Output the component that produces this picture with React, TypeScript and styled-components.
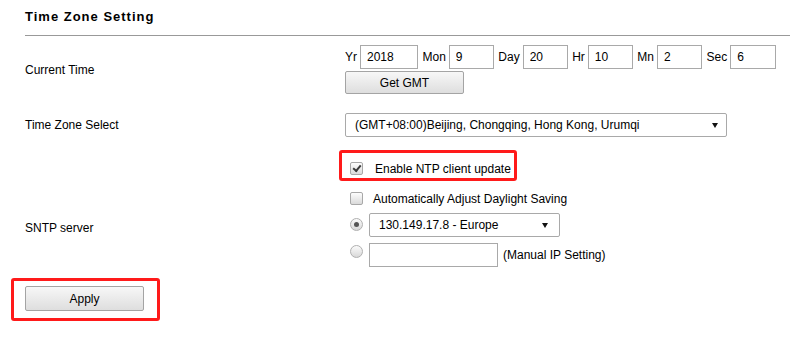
import styled, { createGlobalStyle } from 'styled-components'

const Global = createGlobalStyle`
    body {
        margin: 0;
        background: #fff;
        font-family: "Liberation Sans", Arial, sans-serif;
        font-size: 12px;
        color: #000;
    }
`

const Page = styled.div`
    padding: 9px 0 0 25px;
`

const Title = styled.h2`
    margin: 0;
    font-size: 13px;
    line-height: 15px;
    font-weight: bold;
    letter-spacing: 1px;
`

const Divider = styled.div`
    margin-top: 11px;
    border-top: 1px solid #999;
`

const Row = styled.div<{ $top: number }>`
    display: flex;
    margin-top: ${({ $top }) => $top}px;
`

const Label = styled.div`
    width: 320px;
    flex-shrink: 0;
    align-self: center;
`

const Value = styled.div`
    display: flex;
    flex-direction: column;
    align-items: flex-start;
`

const TimeLine = styled.div`
    display: flex;
    align-items: center;
    gap: 4.5px;
`

const TimeField = styled.label`
    display: flex;
    align-items: center;
    gap: 3px;
`

const TextBox = styled.input<{ $w: number }>`
    box-sizing: border-box;
    width: ${({ $w }) => $w}px;
    height: 24px;
    margin: 0;
    padding: 0 6px;
    border: 1px solid #a9a9a9;
    font-family: inherit;
    font-size: 12px;
    color: #000;
    outline: none;
`

const Button = styled.button<{ $h: number }>`
    width: 119px;
    height: ${({ $h }) => $h}px;
    margin: 0;
    padding: 0;
    border: 1px solid #a4a4a4;
    border-radius: 2px;
    background: linear-gradient(#f7f7f7, #dedede);
    font-family: inherit;
    font-size: 12px;
    color: #000;
`

const SelectWrap = styled.div<{ $w: number }>`
    position: relative;
    width: ${({ $w }) => $w}px;
`

const Select = styled.select`
    box-sizing: border-box;
    width: 100%;
    height: 24px;
    margin: 0;
    padding: 0 20px 0 9px;
    border: 1px solid #a9a9a9;
    border-radius: 2px;
    background: #fff;
    appearance: none;
    font-family: inherit;
    font-size: 12px;
    color: #000;
    outline: none;
`

const Arrow = styled.svg<{ $right: number }>`
    position: absolute;
    right: ${({ $right }) => $right}px;
    top: 10px;
    pointer-events: none;
`

const Highlight = styled.div<{ $shift: number; $pad: string }>`
    display: inline-flex;
    align-items: center;
    margin-left: -${({ $shift }) => $shift}px;
    padding: ${({ $pad }) => $pad};
    border: 3px solid #ff1a1a;
    border-radius: 3px;
`

const CheckLine = styled.label<{ $h: number; $space: number }>`
    display: flex;
    align-items: center;
    height: ${({ $h }) => $h}px;
    gap: ${({ $space }) => $space}px;
`

const Box = styled.input`
    appearance: none;
    box-sizing: border-box;
    width: 13px;
    height: 13px;
    margin: 0 0 0 5px;
    border: 1px solid #a8a8a8;
    border-radius: 2px;
    background: linear-gradient(#fdfdfd, #dadada);
    display: grid;
    place-items: center;

    &:checked::before {
        content: '';
        width: 6px;
        height: 3px;
        margin-top: -2px;
        border-left: 2px solid #3a3a3a;
        border-bottom: 2px solid #3a3a3a;
        transform: rotate(-50deg);
    }
`

const RadioLine = styled.div<{ $top: number }>`
    display: flex;
    align-items: flex-start;
    gap: 6px;
    margin-top: ${({ $top }) => $top}px;
`

const Radio = styled.input<{ $offset: number }>`
    appearance: none;
    box-sizing: border-box;
    width: 13px;
    height: 13px;
    margin: ${({ $offset }) => $offset}px 0 0 5px;
    border: 1px solid #b0b0b0;
    border-radius: 50%;
    background: linear-gradient(#fbfbfb, #d8d8d8);
    display: grid;
    place-items: center;

    &:checked::before {
        content: '';
        width: 5px;
        height: 5px;
        border-radius: 50%;
        background: #555;
    }
`

const Note = styled.span`
    align-self: center;
    margin-left: -1px;
`

const TriangleDown = ({ right }: { right: number }) => (
    <Arrow $right={right} width="6" height="5" viewBox="0 0 6 5">
        <polygon points="0,0 6,0 3,5" fill="#111" />
    </Arrow>
)

const timeFields = [
    { label: 'Yr', value: '2018', w: 58 },
    { label: 'Mon', value: '9', w: 45 },
    { label: 'Day', value: '20', w: 45 },
    { label: 'Hr', value: '10', w: 45 },
    { label: 'Mn', value: '2', w: 45 },
    { label: 'Sec', value: '6', w: 46 },
]

export default function App() {
    return (
        <Page>
            <Global />
            <Title>Time Zone Setting</Title>
            <Divider />

            <Row $top={9}>
                <Label>Current Time</Label>
                <Value>
                    <TimeLine>
                        {timeFields.map((f) => (
                            <TimeField key={f.label}>
                                {f.label}
                                <TextBox $w={f.w} defaultValue={f.value} />
                            </TimeField>
                        ))}
                    </TimeLine>
                    <Button $h={23} style={{ marginTop: 2 }}>Get GMT</Button>
                </Value>
            </Row>

            <Row $top={19}>
                <Label>Time Zone Select</Label>
                <SelectWrap $w={382}>
                    <Select defaultValue="8">
                        <option value="8">(GMT+08:00)Beijing, Chongqing, Hong Kong, Urumqi</option>
                    </Select>
                    <TriangleDown right={9} />
                </SelectWrap>
            </Row>

            <Row $top={13}>
                <Label />
                <Highlight $shift={6} $pad="7px 3px 1px 3px">
                    <CheckLine $h={17} $space={12}>
                        <Box type="checkbox" defaultChecked />
                        Enable NTP client update
                    </CheckLine>
                </Highlight>
            </Row>

            <Row $top={7}>
                <Label>SNTP server</Label>
                <Value>
                    <CheckLine $h={21} $space={10}>
                        <Box type="checkbox" />
                        Automatically Adjust Daylight Saving
                    </CheckLine>
                    <RadioLine $top={4}>
                        <Radio type="radio" name="sntp" $offset={5} defaultChecked />
                        <SelectWrap $w={191}>
                            <Select defaultValue="eu">
                                <option value="eu">130.149.17.8 - Europe</option>
                            </Select>
                            <TriangleDown right={12} />
                        </SelectWrap>
                    </RadioLine>
                    <RadioLine $top={6}>
                        <Radio type="radio" name="sntp" $offset={2} />
                        <TextBox $w={129} />
                        <Note>(Manual IP Setting)</Note>
                    </RadioLine>
                </Value>
            </Row>

            <Row $top={11}>
                <Highlight $shift={14} $pad="5px 13px 7px 11px">
                    <Button $h={25}>Apply</Button>
                </Highlight>
            </Row>
        </Page>
    )
}
